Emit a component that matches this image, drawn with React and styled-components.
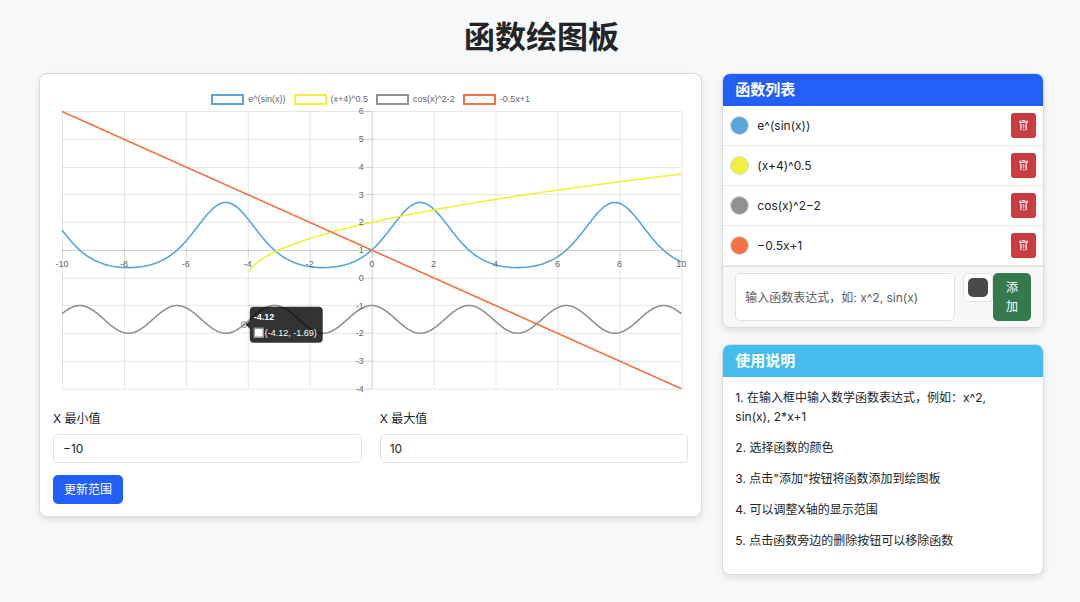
import React, { useState } from 'react'
import styled, { createGlobalStyle } from 'styled-components';
import { BsTrash } from "react-icons/bs";

const initialFunctions = [
    { id: 1, name: 'e^(sin(x))', label: 'e^(sin(x))', color: '#5aa5dc', fn: x => Math.exp(Math.sin(x)) },
    { id: 2, name: '(x+4)^0.5', label: '(x+4)^0.5', color: '#eff03f', fn: x => Math.sqrt(x + 4), from: -3.96 },
    { id: 3, name: 'cos(x)^2−2', label: 'cos(x)^2-2', color: '#919191', fn: x => Math.cos(x) ** 2 - 2 },
    { id: 4, name: '−0.5x+1', label: '-0.5x+1', color: '#f37142', fn: x => -0.5 * x + 1 },
];

const tips = [
    '1. 在输入框中输入数学函数表达式，例如：x^2, sin(x), 2*x+1',
    '2. 选择函数的颜色',
    '3. 点击"添加"按钮将函数添加到绘图板',
    '4. 可以调整X轴的显示范围',
    '5. 点击函数旁边的删除按钮可以移除函数',
];

const xTicks = [-10, -8, -6, -4, -2, 0, 2, 4, 6, 8, 10];
const yTicks = [6, 5, 4, 3, 2, 1, 0, -1, -2, -3, -4];

const toX = x => 319 + x * 31;
const toY = y => 6.5 + (6 - y) * 27.75;
const crisp = v => Math.floor(v) + 0.5;

const buildPath = ({ fn, from = -10 }) => {
    const points = [];
    for (let x = from; x <= 10.001; x += 0.04) {
        points.push(`${toX(x).toFixed(2)},${toY(fn(x)).toFixed(2)}`);
    }
    return `M${points.join('L')}`;
};

function Plot({ functions }) {
    const pointX = toX(-4.12);
    const pointY = toY(-1.69);
    return (
        <PlotSvg viewBox="0 0 636 292" role="img" aria-label="函数绘图板">
            {xTicks.map(t => (
                <g key={t}>
                    <line className={t === 0 ? 'axis' : 'grid'} x1={crisp(toX(t))} x2={crisp(toX(t))} y1={toY(6)} y2={toY(-4)} />
                    <line className="tick" x1={crisp(toX(t))} x2={crisp(toX(t))} y1={toY(1)} y2={toY(1) + 7} />
                </g>
            ))}
            {yTicks.map(t => (
                <g key={t}>
                    <line className={t === 1 ? 'axis' : 'grid'} x1={toX(-10)} x2={toX(10)} y1={crisp(toY(t))} y2={crisp(toY(t))} />
                    <line className="tick" x1={toX(0) - 6} x2={toX(0)} y1={crisp(toY(t))} y2={crisp(toY(t))} />
                </g>
            ))}
            {functions.map(f => (
                <path key={f.id} d={buildPath(f)} fill="none" stroke={f.color} strokeWidth="1.6" />
            ))}
            {xTicks.map(t => (
                <text key={t} x={toX(t)} y={toY(1) + 17} textAnchor="middle">{t}</text>
            ))}
            {yTicks.map(t => (
                <text key={t} x={toX(0) - 8} y={toY(t) + 3} textAnchor="end">{t}</text>
            ))}
            <circle cx={pointX} cy={pointY} r="3" fill="rgba(0, 0, 0, 0.1)" stroke="#919191" />
            <g transform={`translate(${Math.round(pointX)} ${Math.round(pointY)})`}>
                <path d="M2 0L6-4V-13Q6-18 10-18H75Q79-18 79-14V14Q79 18 75 18H10Q6 18 6 14V4Z" fill="rgba(0, 0, 0, 0.8)" />
                <text className="light bold" x="10" y="-5">-4.12</text>
                <rect x="10.5" y="3.5" width="9" height="9" fill="#fff" stroke="#919191" strokeWidth="1.5" />
                <text className="light" x="21" y="11">(-4.12, -1.69)</text>
            </g>
        </PlotSvg>
    )
}

export default function App() {
    const [functions, setFunctions] = useState(initialFunctions);
    const [color, setColor] = useState('#4a4a4a');

    const removeFunction = id => setFunctions(functions.filter(f => f.id !== id));

    return (
        <Page>
            <GlobalStyle />
            <Title>函数绘图板</Title>
            <Row>
                <Column>
                    <Card>
                        <CardBody>
                            <Legend>
                                {functions.map(f => (
                                    <LegendItem key={f.id} $color={f.color}>{f.label}</LegendItem>
                                ))}
                            </Legend>
                            <Plot functions={functions} />
                            <RangeRow>
                                <Field>
                                    <label htmlFor="x-min">X 最小值</label>
                                    <TextInput id="x-min" defaultValue="−10" />
                                </Field>
                                <Field>
                                    <label htmlFor="x-max">X 最大值</label>
                                    <TextInput id="x-max" defaultValue="10" />
                                </Field>
                            </RangeRow>
                            <Button type="button">更新范围</Button>
                        </CardBody>
                    </Card>
                </Column>
                <Column>
                    <Card>
                        <CardHeader $color="#225ff9">函数列表</CardHeader>
                        <FunctionList>
                            {functions.map(f => (
                                <FunctionItem key={f.id}>
                                    <Dot $color={f.color} />
                                    <span>{f.name}</span>
                                    <DeleteButton type="button" aria-label="删除" onClick={() => removeFunction(f.id)}>
                                        <BsTrash />
                                    </DeleteButton>
                                </FunctionItem>
                            ))}
                        </FunctionList>
                        <AddForm onSubmit={e => e.preventDefault()}>
                            <ExpressionInput aria-label="函数表达式" placeholder="输入函数表达式，如: x^2, sin(x)" />
                            <ColorInput type="color" aria-label="颜色" value={color} onChange={e => setColor(e.target.value)} />
                            <AddButton type="submit">添加</AddButton>
                        </AddForm>
                    </Card>
                    <Card>
                        <CardHeader $color="#45bdec">使用说明</CardHeader>
                        <Tips>
                            {tips.map(tip => <p key={tip}>{tip}</p>)}
                        </Tips>
                    </Card>
                </Column>
            </Row>
        </Page>
    )
}

const GlobalStyle = createGlobalStyle`
  *, *::before, *::after {
    box-sizing: border-box;
  }

  body {
    margin: 0;
    background: #f7f8fa;
    color: #212529;
    font-family: Inter, "Noto Sans CJK SC", sans-serif;
    font-size: 12px;
    line-height: 19px;
  }

  input, button {
    font: inherit;
    color: inherit;
  }
`;

const Page = styled.main`
  padding: 18px 26px 24px 29px;
`;

const Title = styled.h1`
  margin: 0 0 17px;
  color: #222426;
  font-size: 31px;
  font-weight: 700;
  line-height: 38px;
  text-align: center;
`;

const Row = styled.div`
  display: grid;
  grid-template-columns: minmax(0, 2fr) minmax(0, 1fr);
  align-items: start;

  @media only screen and (max-width: 768px) {
    grid-template-columns: minmax(0, 1fr);
    gap: 17px;
  }
`;

const Column = styled.div`
  display: flex;
  flex-direction: column;
  gap: 16px;
  padding: 0 10px;
`;

const Card = styled.section`
  border: 1px solid #d9dadc;
  border-radius: 8px;
  background: #fff;
  box-shadow: 0 3px 6px rgba(0, 0, 0, 0.1);
  overflow: hidden;
`;

const CardBody = styled.div`
  padding: 13px 13px 12px;
`;

const CardHeader = styled.h2`
  margin: 0 -1px;
  padding: 6px 13px 7px;
  background: ${({ $color }) => $color};
  color: #fff;
  font-size: 15px;
  font-weight: 700;
  line-height: 19px;
`;

const Legend = styled.ul`
  display: flex;
  flex-wrap: wrap;
  justify-content: center;
  gap: 8px;
  margin: 0;
  padding: 7px 0 0;
  list-style: none;
  color: #666;
  font-family: "Liberation Sans", Arial, sans-serif;
  font-size: 9px;
  line-height: 11px;
`;

const LegendItem = styled.li`
  display: flex;
  align-items: center;
  gap: 4px;

  &::before {
    content: '';
    width: 33px;
    height: 11px;
    border: 2px solid ${({ $color }) => $color};
  }
`;

const PlotSvg = styled.svg`
  display: block;
  width: 100%;
  font-family: "Liberation Sans", Arial, sans-serif;
  font-size: 9px;

  text {
    fill: #666;
  }

  .light {
    fill: #fff;
  }

  .bold {
    font-weight: 700;
  }

  .grid, .tick {
    stroke: rgba(0, 0, 0, 0.1);
  }

  .axis {
    stroke: rgba(0, 0, 0, 0.2);
  }
`;

const RangeRow = styled.div`
  display: flex;
  gap: 18px;
  margin: 12px 0;
`;

const Field = styled.div`
  display: flex;
  flex: 1;
  flex-direction: column;
  gap: 6px;
`;

const TextInput = styled.input`
  width: 100%;
  min-width: 0;
  height: 29px;
  padding: 0 9px;
  border: 1px solid #dee2e6;
  border-radius: 5px;
  background: #fff;
  outline: none;

  &::placeholder {
    color: #595c5f;
    opacity: 1;
  }
`;

const ExpressionInput = styled(TextInput)`
  flex: 1;
  height: auto;
  margin-right: 8px;
`;

const Button = styled.button`
  padding: 5px 11px;
  border: 0;
  border-radius: 5px;
  background: #225ff9;
  color: #fff;
  cursor: pointer;
`;

const AddButton = styled(Button)`
  width: 38px;
  padding: 5px 12px;
  background: #347a4e;
`;

const FunctionList = styled.ul`
  margin: 0;
  padding: 0;
  list-style: none;
`;

const FunctionItem = styled.li`
  display: flex;
  align-items: center;
  gap: 8px;
  height: 40px;
  padding: 0 7px;
  border-bottom: 1px solid #e9eaec;
`;

const Dot = styled.i`
  width: 19px;
  height: 19px;
  border: 1px solid #d4d6d8;
  border-radius: 50%;
  background: ${({ $color }) => $color};
`;

const DeleteButton = styled.button`
  display: flex;
  align-items: center;
  justify-content: center;
  width: 25px;
  height: 25px;
  margin-left: auto;
  padding: 0;
  border: 0;
  border-radius: 3px;
  background: #c93d40;
  color: #fff;
  font-size: 11px;
  cursor: pointer;
`;

const AddForm = styled.form`
  display: flex;
  padding: 6px 12px;
  border-top: 1px solid #dfe0e2;
  background: #f7f7f7;
`;

const ColorInput = styled.input`
  width: 30px;
  height: 29px;
  padding: 4px;
  border: 1px solid #dee2e6;
  border-radius: 5px;
  background: #fff;

  &::-webkit-color-swatch-wrapper {
    padding: 0;
  }

  &::-webkit-color-swatch {
    border: 0;
    border-radius: 5px;
  }
`;

const Tips = styled.div`
  padding: 11px 24px 12px 12px;

  p {
    margin: 0 0 12px;
  }
`;
